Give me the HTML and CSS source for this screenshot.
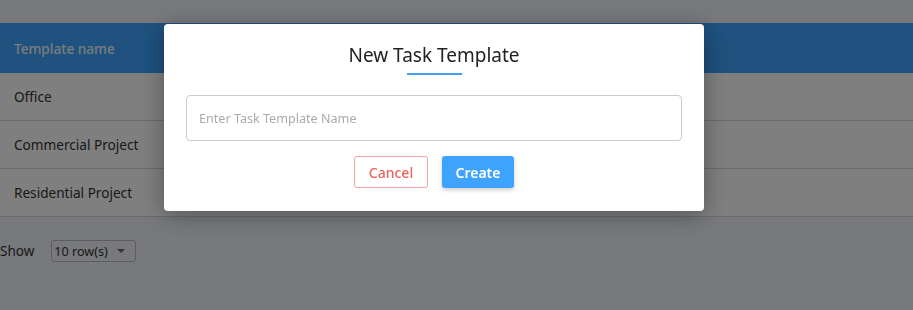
FILE: index.html
```html
<!DOCTYPE html>
<html lang="en">
<head>
  <meta charset="UTF-8" />
  <title>Task Templates</title>
  <meta name="viewport" content="width=device-width, initial-scale=1.0" />
  <link rel="stylesheet" href="styles.css">
</head>
<body>

  <!-- template list -->
  <div class="page">
    <table class="templates">
      <thead>
        <tr><th>Template name</th></tr>
      </thead>
      <tbody>
        <tr><td>Office</td></tr>
        <tr><td>Commercial Project</td></tr>
        <tr><td>Residential Project</td></tr>
      </tbody>
    </table>

    <div class="pager">
      <span>Show</span>
      <div class="rows-select">10 row(s) <span class="caret"></span></div>
    </div>
  </div>

  <!-- new template dialog -->
  <div class="overlay">
    <div class="modal">
      <h2 class="modal-title">New Task Template</h2>
      <div class="title-line"></div>
      <input class="name-input" type="text" placeholder="Enter Task Template Name" />
      <div class="actions">
        <button class="btn btn-cancel">Cancel</button>
        <button class="btn btn-create">Create</button>
      </div>
    </div>
  </div>

</body>
</html>
```

FILE: styles.css
```css
body {
  margin: 0;
  background: #eef3f9;
  font-family: 'Noto Sans', 'Open Sans', sans-serif;
  color: #333;
}

.page {
  padding-top: 23px;
}

.templates {
  width: 100%;
  border-collapse: collapse;
  font-size: 13.6px;
}

.templates th {
  height: 50px;
  padding: 0 14px;
  text-align: left;
  background: #3ea4ff;
  color: #f4f8fb;
  font-weight: 500;
}

.templates td {
  height: 47px;
  padding: 0 14px;
  background: #fff;
  border-bottom: 1px solid #d6d6d6;
}

.pager {
  display: flex;
  align-items: center;
  gap: 17px;
  margin-top: 23px;
  font-size: 13.5px;
}

.rows-select {
  display: flex;
  align-items: center;
  gap: 9px;
  width: 81px;
  height: 20px;
  padding-left: 2px;
  border: 1px solid #bbb;
  border-radius: 3px;
  font-size: 12.6px;
  box-sizing: content-box;
}

.caret {
  width: 0;
  height: 0;
  border-left: 4px solid transparent;
  border-right: 4px solid transparent;
  border-top: 4px solid #666;
}

.overlay {
  position: fixed;
  inset: 0;
  background: rgba(0, 0, 0, 0.5);
  display: flex;
  justify-content: center;
  align-items: flex-start;
  padding: 24px 45px 0 0;
}

.modal {
  width: 540px;
  box-sizing: border-box;
  padding: 18px 22px 23px;
  background: #fff;
  border-radius: 4px;
  box-shadow: 0 4px 24px rgba(0, 0, 0, 0.35);
  display: flex;
  flex-direction: column;
  align-items: center;
}

.modal-title {
  margin: 0;
  font-size: 19px;
  line-height: 27px;
  font-weight: 400;
  color: #222;
}

.title-line {
  width: 55px;
  height: 2px;
  margin-top: 4px;
  background: #3fa0f5;
}

.name-input {
  width: 100%;
  height: 46px;
  margin-top: 20px;
  box-sizing: border-box;
  padding: 0 12px;
  border: 1px solid #ccc;
  border-radius: 4px;
  font-family: inherit;
  font-size: 12.6px;
  color: #333;
}

.name-input::placeholder {
  color: #aaa;
}

.actions {
  display: flex;
  gap: 14px;
  margin-top: 15px;
}

.btn {
  height: 32px;
  border-radius: 3px;
  font-family: inherit;
  font-size: 14px;
  cursor: pointer;
}

.btn-cancel {
  width: 74px;
  background: #fff;
  border: 1px solid #f8a5a2;
  color: #f0625b;
  font-weight: 500;
}

.btn-create {
  width: 72px;
  background: #3ea3fd;
  border: none;
  color: #fff;
  font-weight: 600;
  box-shadow: 0 2px 4px rgba(0, 0, 0, 0.2);
}
```
